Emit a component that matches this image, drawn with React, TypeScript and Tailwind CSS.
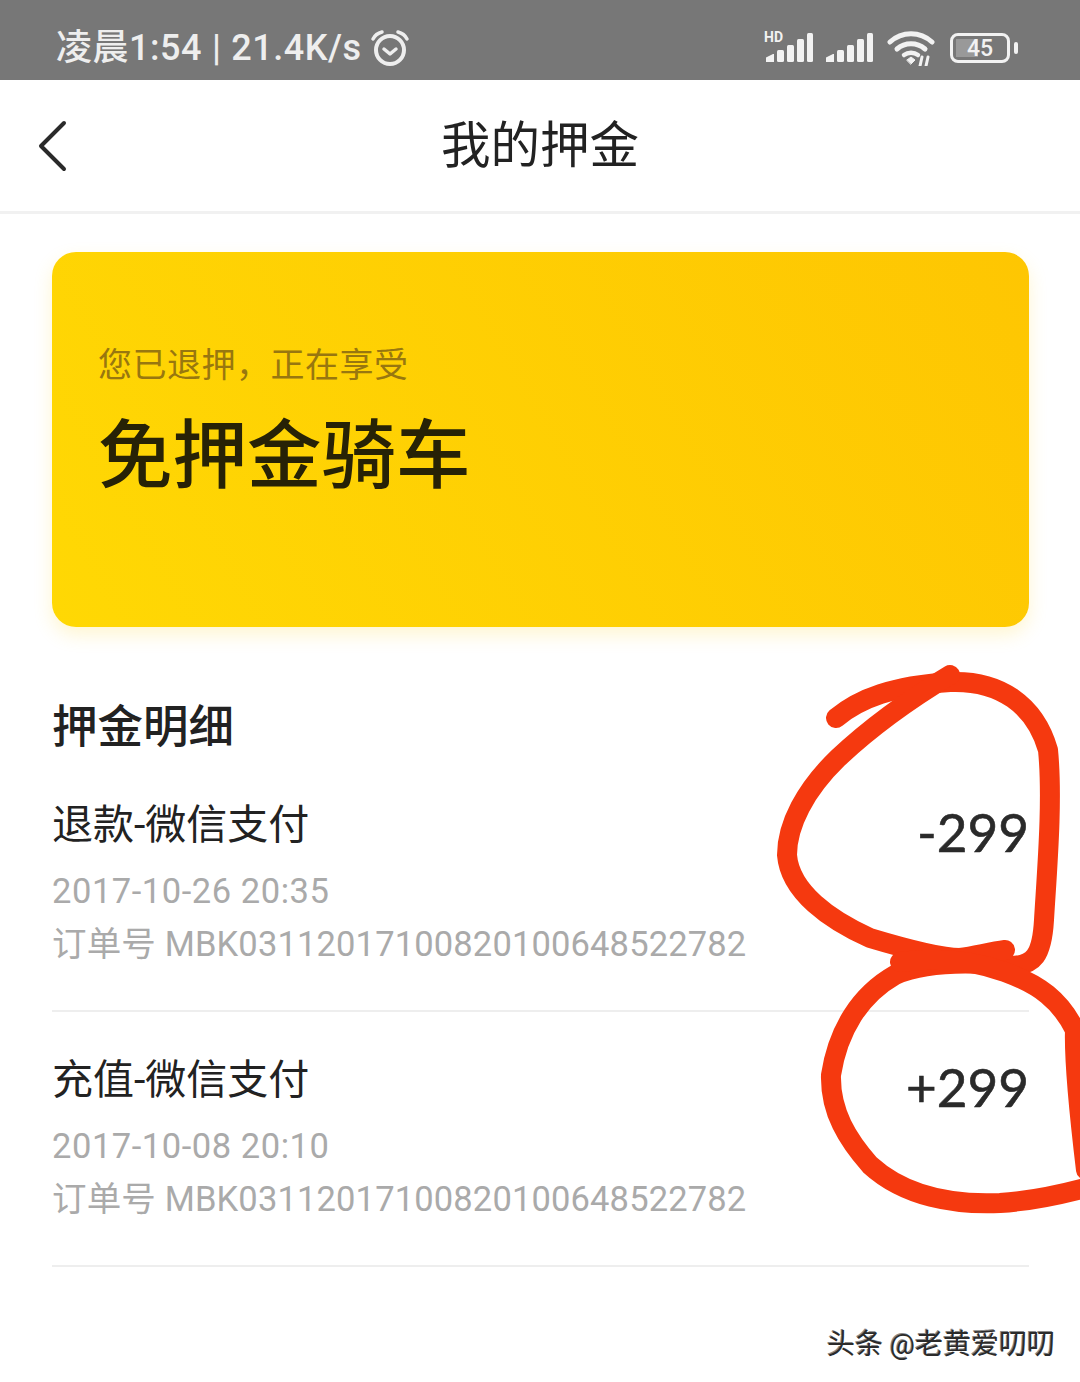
const cjk = "font-['Roboto','Noto_Sans_CJK_SC',sans-serif]";

function Bars({ hd }: { hd?: boolean }) {
  return (
    <svg width="50" height="36" viewBox="0 0 50 36">
      {hd && (
        <text x="0" y="12" fontSize="14" fontWeight="700" fill="#f2f2f2" fontFamily="Roboto, sans-serif">
          HD
        </text>
      )}
      <path d="M2 32v-4.5l7-3.5h1v8z" fill="#f2f2f2" />
      <rect x="13" y="20" width="7" height="12" rx="1.5" fill="#f2f2f2" />
      <rect x="23" y="15" width="7" height="17" rx="1.5" fill="#f2f2f2" />
      <rect x="33" y="9" width="7" height="23" rx="1.5" fill="#f2f2f2" />
      <rect x="43" y="3" width="6" height="29" rx="1.5" fill="#f2f2f2" />
    </svg>
  );
}

function Row({ title, date, amount }: { title: string; date: string; amount: string }) {
  return (
    <div className="flex items-start justify-between h-[255px] border-b-2 border-[#eeeeee]">
      <div className="flex flex-col pt-[41px]">
        <div className="text-[41px] leading-[54px] text-[#222222]">{title}</div>
        <div className="mt-[16px] text-[34.5px] leading-[46px] tracking-[0.55px] text-[#aaaaaa]">{date}</div>
        <div className="mt-[7px] text-[34.5px] leading-[46px] text-[#aaaaaa] tracking-[0.15px]">
          订单号 MBK03112017100820100648522782
        </div>
      </div>
      <div className="text-[53px] leading-[70px] mt-[40px] text-[#2a2a2a] [-webkit-text-stroke:0.6px_#2a2a2a] font-['Lato','Roboto',sans-serif]">{amount}</div>
    </div>
  );
}

export default function App() {
  return (
    <div className={`relative w-[1080px] h-[1382px] overflow-hidden bg-white ${cjk}`}>
      <div className="h-[80px] bg-[#777777] flex items-center justify-between pl-[56px] pr-[62px] pt-[16px] text-[#eeeeee]">
        <div className="flex items-center">
          <span className="text-[36px] leading-[44px] font-medium tracking-[0.5px]">
            凌晨1:54<span className="mx-[10px]">|</span>21.4K/s
          </span>
          <svg width="40" height="38" viewBox="0 0 40 38" className="ml-[8px]" fill="none" stroke="#eeeeee" strokeLinecap="round">
            <circle cx="20" cy="21" r="14" strokeWidth="4" />
            <path d="M14 20l6 5 6-5" strokeWidth="3.5" strokeLinejoin="round" />
            <path d="M3 10c2-4 5-6 9-7M37 10c-2-4-5-6-9-7" strokeWidth="3.5" />
          </svg>
        </div>
        <div className="flex items-center">
          <Bars hd />
          <div className="ml-[10px]"><Bars /></div>
          <svg width="48" height="36" viewBox="0 0 48 36" className="ml-[13px]" fill="none" stroke="#f2f2f2" strokeLinecap="round">
            <path d="M3 12C15 1 33 1 45 12" strokeWidth="5" />
            <path d="M10 19c8-7 20-7 28 0" strokeWidth="5" />
            <path d="M17 25c4-3 10-3 14 0" strokeWidth="4.5" />
            <path d="M20 30l4-3 4 3-4 4z" fill="#f2f2f2" strokeWidth="1" />
            <path d="M33 36l2-9M41 27l-2 9" strokeWidth="3" />
          </svg>
          <div className="relative ml-[15px] w-[60px] h-[30px] rounded-[8px] border-[3px] border-[#f2f2f2] flex items-center justify-center overflow-hidden">
            <div className="absolute left-[3px] top-[3px] bottom-[3px] w-[22px] bg-[#999999]" />
            <span className="relative text-[23px] leading-none font-medium text-[#f2f2f2]">45</span>
          </div>
          <div className="ml-[4px] w-[4px] h-[12px] rounded-[2px] bg-[#f2f2f2]" />
        </div>
      </div>

      <div className="relative h-[134px] flex items-center justify-center border-b-[3px] border-[#f1f1f1]">
        <svg width="32" height="52" viewBox="0 0 32 52" className="absolute left-[37px] top-[40px]" fill="none" stroke="#2a2a2a" strokeWidth="4" strokeLinecap="round" strokeLinejoin="round">
          <path d="M27 3L4 26l23 23" />
        </svg>
        <span className="text-[49.5px] leading-[60px] text-[#222222]">我的押金</span>
      </div>

      <div className="px-[52px] pt-[38px]">
        <div className="h-[375px] w-[977px] rounded-[24px] bg-linear-60 from-[#ffd804] to-[#fec602] shadow-[0_8px_18px_rgba(255,214,50,0.22)] pl-[46px] pt-[90px]">
          <div className="text-[34px] leading-[46px] tracking-[0.5px] text-[#98770f]">您已退押，正在享受</div>
          <div className="mt-[24px] text-[74.5px] leading-[90px] font-medium text-[#272206]">免押金骑车</div>
        </div>

        <div className="mt-[74px] text-[45.5px] leading-[54px] font-medium text-[#222222]">押金明细</div>

        <div className="w-[977px] mt-[2px]">
          <Row title="退款-微信支付" date="2017-10-26 20:35" amount="-299" />
          <Row title="充值-微信支付" date="2017-10-08 20:10" amount="+299" />
        </div>
      </div>

      <div className="absolute right-[25px] top-[1324px] text-[28px] leading-[42px] text-[#2b2b2b] [text-shadow:1px_1px_0_#fff,-1px_-1px_0_#888]">
        头条 @老黄爱叨叨
      </div>

      <svg width="1080" height="1382" viewBox="0 0 1080 1382" className="absolute inset-0 pointer-events-none" fill="none" stroke="#f5390f" strokeWidth="20" strokeLinecap="round" strokeLinejoin="round">
        <path d="M836 718C860 698 893 686 950 682C1000 680 1035 705 1048 750C1053 800 1047 870 1044 920C1042 955 1034 966 1010 966C970 962 925 962 895 975C860 995 838 1030 831 1075C830 1112 848 1140 870 1165C905 1197 955 1205 1000 1203C1030 1201 1055 1196 1085 1188" />
        <path d="M950 675C905 702 870 728 838 758C805 790 787 825 787 855C790 892 830 920 870 938C910 950 945 958 960 958C975 956 990 952 1005 950" />
        <path d="M900 962C930 958 965 958 1005 972C1040 985 1060 1000 1075 1030C1074 1060 1080 1120 1086 1170" />
      </svg>
    </div>
  );
}
